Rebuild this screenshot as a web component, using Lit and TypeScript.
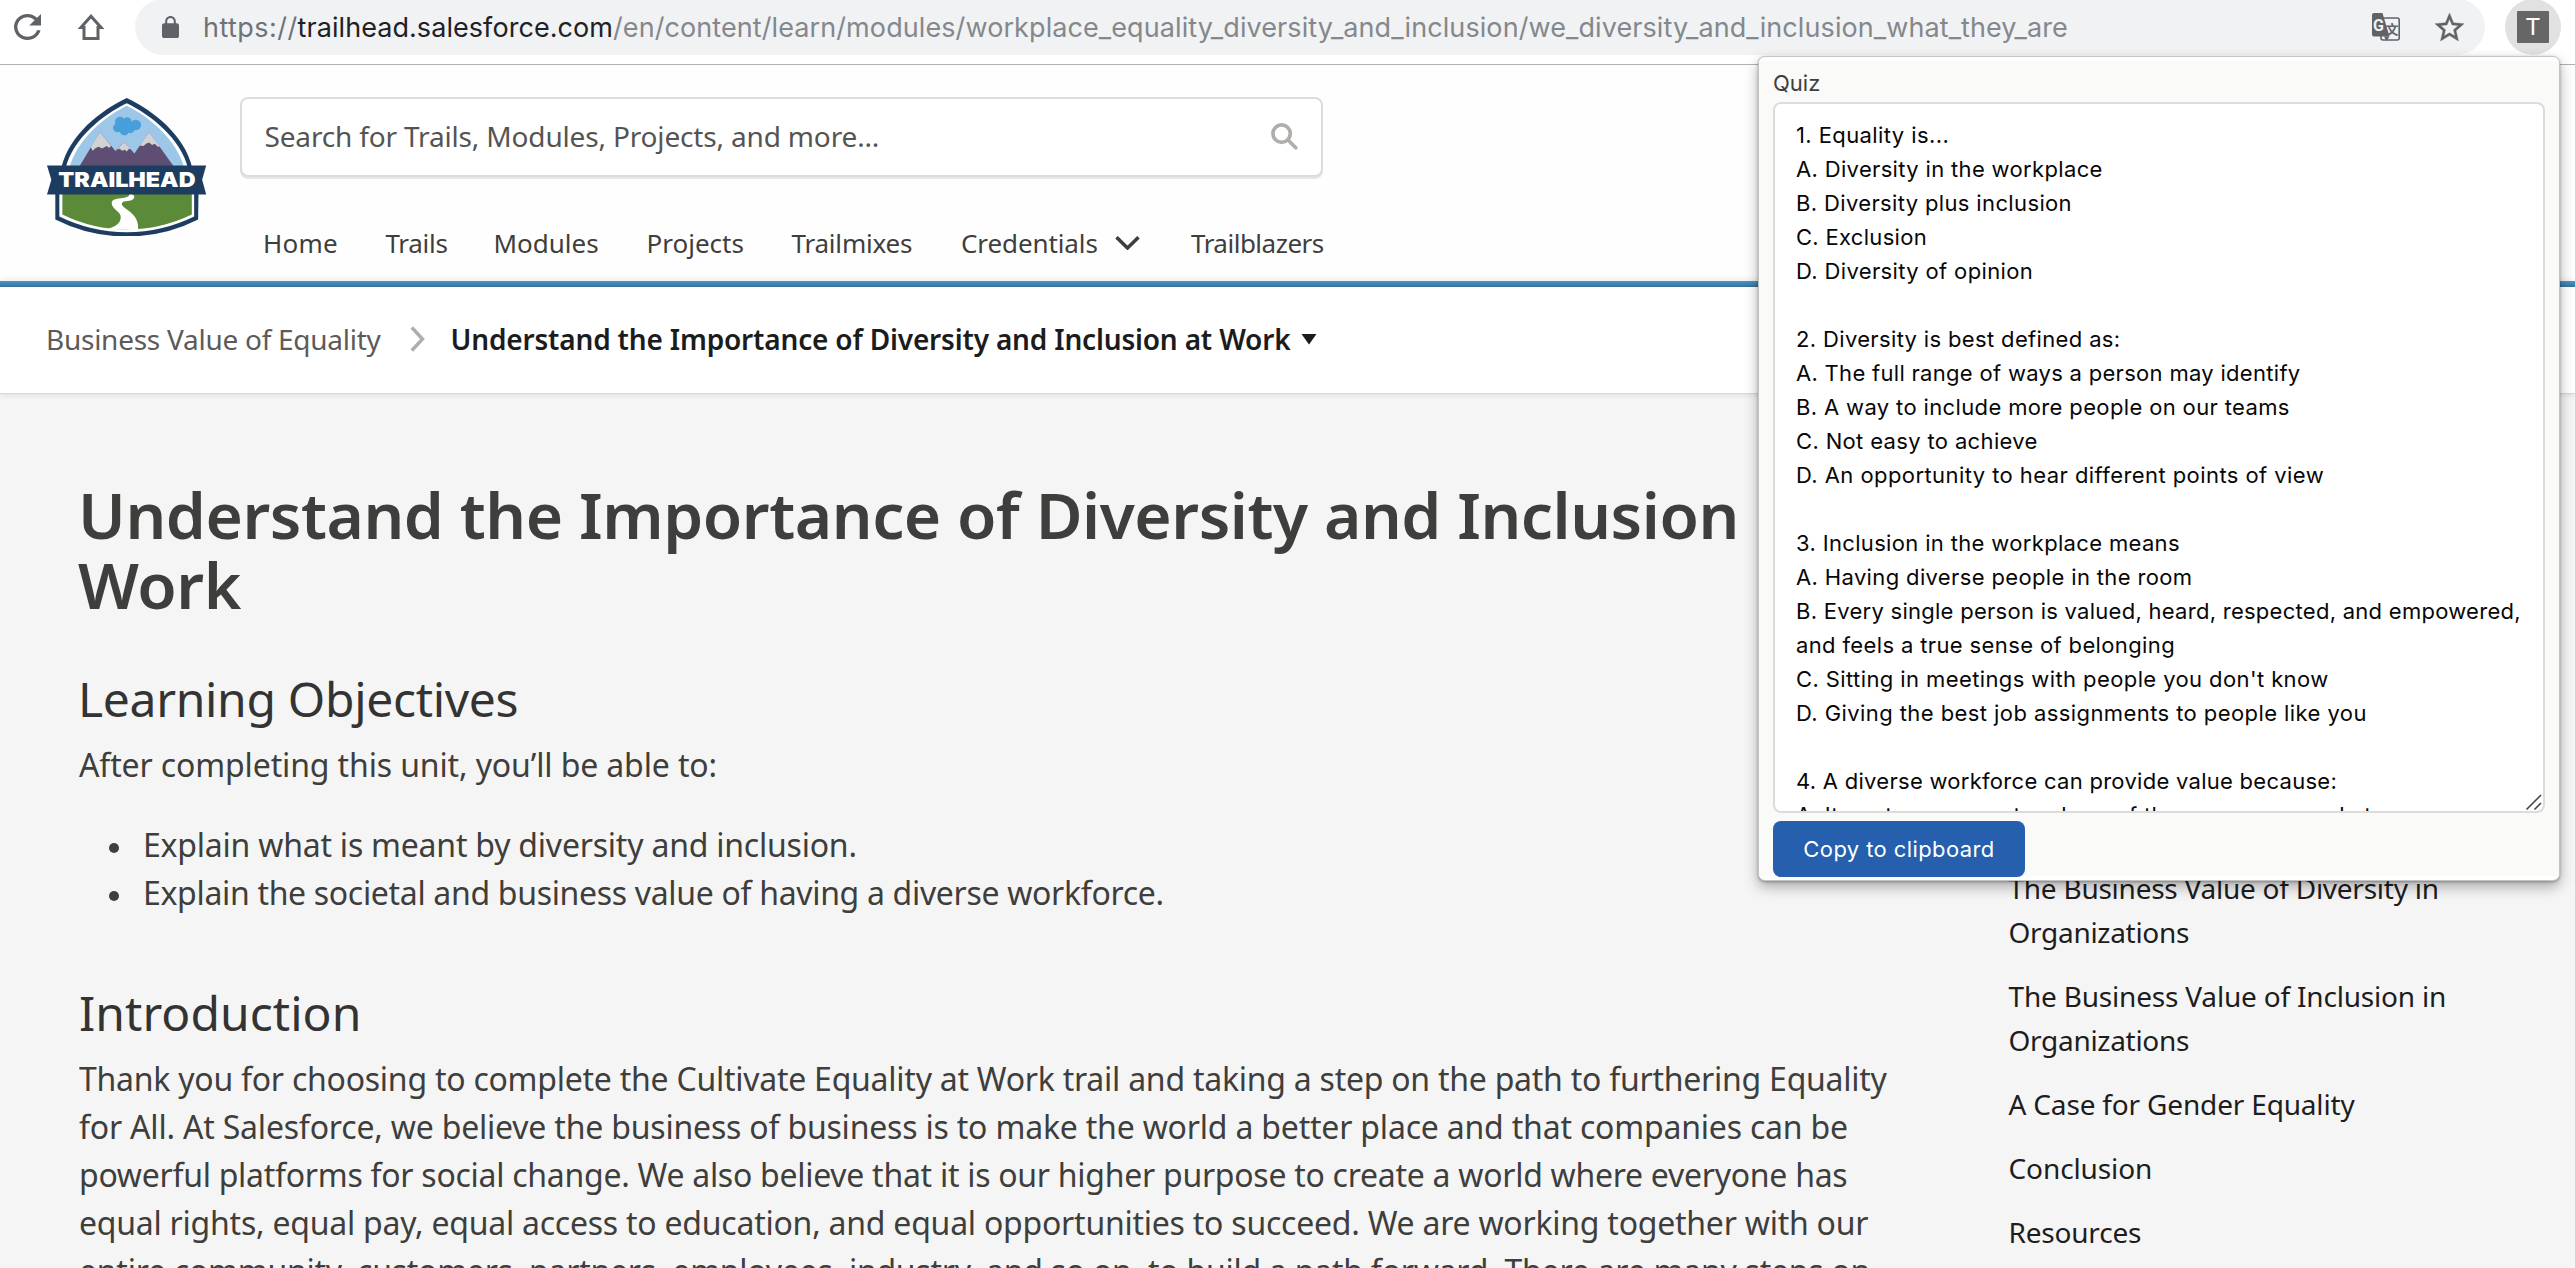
import { LitElement, html, css, svg } from "lit";
import { customElement } from "lit/decorators.js";

interface Line {
  text: string;
  ls: number;
}

const NAV: Line[] = [
  { text: "Home", ls: 0.2 },
  { text: "Trails", ls: -0.3 },
  { text: "Modules", ls: 0 },
  { text: "Projects", ls: 0 },
  { text: "Trailmixes", ls: -0.2 },
  { text: "Credentials", ls: -0.1 },
  { text: "Trailblazers", ls: -0.5 },
];

const OBJECTIVES: Line[] = [
  { text: "Explain what is meant by diversity and inclusion.", ls: -0.22 },
  { text: "Explain the societal and business value of having a diverse workforce.", ls: -0.32 },
];

const INTRO: Line[] = [
  { text: "Thank you for choosing to complete the Cultivate Equality at Work trail and taking a step on the path to furthering Equality", ls: -0.248 },
  { text: "for All. At Salesforce, we believe the business of business is to make the world a better place and that companies can be", ls: -0.198 },
  { text: "powerful platforms for social change. We also believe that it is our higher purpose to create a world where everyone has", ls: -0.275 },
  { text: "equal rights, equal pay, equal access to education, and equal opportunities to succeed. We are working together with our", ls: -0.238 },
  { text: "entire community, customers, partners, employees, industry, and so on, to build a path forward. There are many steps on", ls: -0.245 },
];

const TOC: Line[][] = [
  [{ text: "The Business Value of Diversity in", ls: -0.25 }, { text: "Organizations", ls: -0.3 }],
  [{ text: "The Business Value of Inclusion in", ls: -0.19 }, { text: "Organizations", ls: -0.3 }],
  [{ text: "A Case for Gender Equality", ls: -0.17 }],
  [{ text: "Conclusion", ls: -0.1 }],
  [{ text: "Resources", ls: -0.2 }],
];

const QUIZ: Line[] = [
  { text: "1. Equality is...", ls: 0.4 },
  { text: "A. Diversity in the workplace", ls: 0.34 },
  { text: "B. Diversity plus inclusion", ls: 0.36 },
  { text: "C. Exclusion", ls: 0.3 },
  { text: "D. Diversity of opinion", ls: 0.36 },
  { text: "", ls: 0 },
  { text: "2. Diversity is best defined as:", ls: 0.35 },
  { text: "A. The full range of ways a person may identify", ls: 0.3 },
  { text: "B. A way to include more people on our teams", ls: 0.36 },
  { text: "C. Not easy to achieve", ls: 0.35 },
  { text: "D. An opportunity to hear different points of view", ls: 0.43 },
  { text: "", ls: 0 },
  { text: "3. Inclusion in the workplace means", ls: 0.34 },
  { text: "A. Having diverse people in the room", ls: 0.36 },
  { text: "B. Every single person is valued, heard, respected, and empowered,", ls: 0.27 },
  { text: "and feels a true sense of belonging", ls: 0.37 },
  { text: "C. Sitting in meetings with people you don't know", ls: 0.4 },
  { text: "D. Giving the best job assignments to people like you", ls: 0.42 },
  { text: "", ls: 0 },
  { text: "4. A diverse workforce can provide value because:", ls: 0.28 },
  { text: "A. It captures a greater share of the consumer market", ls: 0.36 },
];

const row = (l: Line) => html`<span class="line" style="letter-spacing:${l.ls}px">${l.text}</span>`;

const logo = svg`
<svg class="logo" viewBox="52 53 478 415" preserveAspectRatio="none">
  <path fill="#1d3d60" d="M291 53C212 90 117 165 95 262H487C465 165 370 90 291 53Z"/>
  <path fill="#fff" d="M291 69C218 104 130 175 108 262H474C452 175 364 104 291 69Z"/>
  <path fill="#9cc7e8" d="M291 76C224 109 142 176 119 262H463C440 176 358 109 291 76Z"/>
  <g fill="#479fdb"><circle cx="271" cy="124" r="15"/><circle cx="293" cy="124" r="13"/><circle cx="318" cy="134" r="16"/><circle cx="264" cy="142" r="14"/><circle cx="284" cy="151" r="14"/><circle cx="302" cy="145" r="13"/><circle cx="290" cy="136" r="14"/></g>
  <path fill="#5f4e74" d="M149 258L211 155L257 212L283 185L314 219L358 155L432 258Z"/>
  <g fill="#d0d2d4">
    <path d="M211 155L183 200L189 211L198 203L207 199L217 204L231 197L238 203L244 196Z"/>
    <path d="M283 185L262 207L270 205L277 211L285 208L291 213L297 206L302 206Z"/>
    <path d="M358 155L330 195L341 197L350 189L358 186L367 194L375 190L384 199L390 198Z"/>
  </g>
  <path fill="#1d3d60" d="M77 335V417Q178 468 291 468T505 417L506 335Z"/>
  <path fill="#fff" d="M89 335V408Q185 455 291 455T493 408V335Z"/>
  <path fill="#5b8b38" d="M98 335V402Q190 447 291 447T486 402V335Z"/>
  <path fill="#fff" d="M299 341C312 341 315 346 313 353C308 366 276 358 276 371C281 388 330 396 325 449L232 445C262 438 273 424 273 410C273 391 246 386 246 368C247 347 300 360 299 341Z"/>
  <path fill="#1d3d60" d="M52 255H529L517 298L529 342H52L65 298Z"/>
  <text class="logo-text" x="86" y="320" textLength="411" lengthAdjust="spacingAndGlyphs">TRAILHEAD</text>
</svg>`;

@customElement("app-root")
export class AppRoot extends LitElement {
  static styles = css`
    :host {
      display: block;
      position: relative;
      width: 100%;
      height: 1268px;
      overflow: hidden;
      background: #f5f5f5;
      color: #3e3e3c;
      font-family: "Noto Sans", sans-serif;
    }
    * { box-sizing: border-box; }
    svg { display: block; flex: none; }
    .line { display: block; white-space: pre; }

    .toolbar {
      display: flex;
      align-items: center;
      height: 65px;
      padding: 0 15px 10px 14px;
      background: #fff;
      border-bottom: 1px solid #b0b1b3;
      color: #5f6368;
    }
    .home { margin-left: 37px; }
    .pill {
      display: flex;
      align-items: center;
      width: 2350px;
      height: 56px;
      margin-left: 31px;
      padding: 0 21.5px 0 27px;
      border-radius: 28px;
      background: #f1f2f4;
      flex: none;
    }
    .url {
      flex: 1;
      display: flex;
      margin-left: 24px;
      padding-top: 1px;
      font: 27px/40px Inter, sans-serif;
      white-space: pre;
    }
    .scheme { letter-spacing: 0.45px; color: #6f7377; }
    .domain { letter-spacing: 0.06px; color: #202124; }
    .path { letter-spacing: 0.09px; color: #84888c; }
    .star { margin-left: 35px; }
    .glyph-g { font: 700 16px Roboto, sans-serif; fill: #f1f2f4; }
    .glyph-w { font: 700 13px "Noto Sans CJK SC", sans-serif; fill: #5f6368; }
    .avatar {
      display: flex;
      align-items: center;
      justify-content: center;
      width: 56px;
      height: 56px;
      margin-left: 20px;
      border-radius: 50%;
      background: #e1e1e1;
      flex: none;
    }
    .avatar-tile {
      width: 32px;
      height: 32px;
      border-radius: 1px;
      background: #666;
      color: #fff;
      font: 24px/32px Roboto, sans-serif;
      text-align: center;
    }

    .header {
      display: flex;
      height: 216px;
      padding: 32px 0 0 47px;
      background: #fefefe;
    }
    .logo { width: 159.5px; height: 138.5px; margin-top: 0.7px; }
    .logo-text { font: 900 62px Inter, sans-serif; fill: #fff; }
    .header-main { width: 1083px; margin-left: 33px; }
    .search {
      display: flex;
      align-items: center;
      justify-content: space-between;
      height: 80px;
      padding: 0 22.5px 2px 23px;
      border: 2px solid #dcdcdb;
      border-radius: 8px;
      background: #fff;
      box-shadow: 0 2px 0 #e6e6e6;
      color: #555452;
      font-size: 28px;
      line-height: 40px;
      letter-spacing: -0.16px;
    }
    .nav {
      display: grid;
      grid-template-columns: 122.5px 108px 153px 145px 169.5px 230px auto;
      margin: 48px 0 0 23.500px;
      font-size: 26px;
      line-height: 36px;
    }
    .nav-item { display: flex; align-items: center; gap: 17px; white-space: nowrap; }

    .bar {
      height: 6px;
      background: linear-gradient(#4996c6, #39729a);
      box-shadow: 0 0 6px rgba(0, 0, 0, 0.12);
    }
    .crumbs {
      display: flex;
      align-items: center;
      height: 107px;
      padding: 0 0 2px 46px;
      background: #fff;
      border-bottom: 1px solid #d8d8d8;
      box-shadow: 0 2px 5px rgba(0, 0, 0, 0.08);
      font-size: 28px;
      line-height: 40px;
      white-space: nowrap;
      position: relative;
    }
    .crumb { color: #5c5b59; letter-spacing: -0.26px; width: 364px; }
    .crumb-current { margin-left: 25.500px; font-weight: 600; color: #1c1c1c; letter-spacing: -0.18px; width: 850.5px; }

    .page { display: flex; }
    .content { width: 2008.5px; padding: 86px 0 0 79px; flex: none; }
    .title { margin: 0 0 0 -1px; font-size: 64px; line-height: 70px; font-weight: 600; letter-spacing: -0.43px; }
    .section { margin: 0 0 0 -1px; font-size: 48px; line-height: 60px; font-weight: 400; color: #333; }
    .objectives { margin-top: 49px; letter-spacing: -0.32px; }
    .intro { margin-top: 66px; margin-left: 0; letter-spacing: 0.05px; }
    .text { margin: 12px 0 0; font-size: 32px; line-height: 48px; }
    .lead { letter-spacing: -0.13px; }
    .list { margin: 32px 0 0; padding: 0; list-style: none; font-size: 32px; line-height: 48px; }
    .item { display: flex; align-items: center; }
    .dot { width: 10px; height: 10px; margin: 5px 24px 0 30px; border-radius: 50%; background: #3e3e3c; }

    .toc {
      display: flex;
      flex-direction: column;
      gap: 20px;
      padding-top: 472px;
      font-size: 28px;
      line-height: 44px;
      color: #1d1d1d;
    }

    .popup {
      position: absolute;
      left: 1758px;
      top: 56px;
      width: 802px;
      height: 825px;
      padding: 4px 0;
      border: 1px solid #c4c4c4;
      border-radius: 7px;
      background: #fff;
      box-shadow: 0 6px 14px rgba(0, 0, 0, 0.3), 0 1px 3px rgba(0, 0, 0, 0.3);
    }
    .popup-body {
      height: 815px;
      padding: 7px 14.5px 0 14px;
      background: #fafaf9;
      font-family: Inter, sans-serif;
      font-size: 22px;
    }
    .label { line-height: 30px; }
    .area {
      position: relative;
      height: 711px;
      margin-top: 4px;
      padding: 14px 0 0 21px;
      border: 2px solid #dcdcdb;
      border-radius: 8px;
      background: #fff;
      color: #080707;
      line-height: 34px;
      overflow: hidden;
    }
    .area .line { height: 34px; }
    .grip { position: absolute; right: 0; bottom: 0; }
    .copy {
      display: block;
      width: 252px;
      height: 56px;
      margin: 8px 0 0;
      padding: 0;
      border: 0;
      border-radius: 8px;
      background: #255fad;
      color: #fff;
      font: 22px/56px Inter, sans-serif;
      letter-spacing: 0.4px;
    }
  `;

  render() {
    return html`
      <div class="toolbar">
        <svg width="27" height="26" viewBox="4 4 16 16" preserveAspectRatio="none" fill="#5f6368"><path d="M17.65 6.35A7.958 7.958 0 0012 4c-4.42 0-7.99 3.58-7.99 8s3.57 8 7.99 8c3.73 0 6.84-2.55 7.73-6h-2.08A5.99 5.99 0 0112 18c-3.31 0-6-2.69-6-6s2.69-6 6-6c1.66 0 3.14.69 4.22 1.78L13 11h7V4l-2.35 2.35z"/></svg>
        <svg class="home" width="26" height="26" viewBox="0 0 26 26" fill="none" stroke="#5f6368" stroke-width="3"><path d="M13 2.2L23 13.4H20V24.5H6V13.4H3Z"/></svg>
        <div class="pill">
          <svg width="17" height="22" viewBox="4 1 16 21" preserveAspectRatio="none" fill="#5f6368"><path d="M18 8h-1V6c0-2.760-2.240-5-5-5S7 3.240 7 6v2H6c-1.100 0-2 .9-2 2v10c0 1.100.9 2 2 2h12c1.100 0 2-.9 2-2V10c0-1.100-.9-2-2-2zM8.900 8V6c0-1.710 1.390-3.100 3.100-3.100s3.100 1.390 3.100 3.100v2H8.900z"/></svg>
          <div class="url"><span class="scheme">https://</span><span class="domain">trailhead.salesforce.com</span><span class="path">/en/content/learn/modules/workplace_equality_diversity_and_inclusion/we_diversity_and_inclusion_what_they_are</span></div>
          <svg width="28" height="28" viewBox="0 0 28 28">
            <rect x="9" y="5" width="18.200" height="22" rx="2" fill="none" stroke="#5f6368" stroke-width="1.600"/>
            <path d="M2 0H10.500L17.500 23.500H2A2 2 0 010 21.500V2A2 2 0 012 0Z" fill="#5f6368"/>
            <path d="M12 23.500H17.500L14.500 28Z" fill="#5f6368"/>
            <text class="glyph-g" x="1" y="17.500">G</text>
            <text class="glyph-w" x="13.500" y="20.500">文</text>
          </svg>
          <svg class="star" width="29" height="28" viewBox="2 2 20 19" preserveAspectRatio="none" fill="#5f6368" stroke="#5f6368" stroke-width=".25"><path d="M22 9.240l-7.190-.62L12 2 9.190 8.630 2 9.240l5.460 4.730L5.820 21 12 17.270 18.180 21l-1.630-7.030L22 9.240zM12 15.400l-3.760 2.270 1-4.280-3.320-2.880 4.380-.38L12 6.100l1.710 4.040 4.380.38-3.320 2.880 1 4.280L12 15.400z"/></svg>
        </div>
        <div class="avatar"><div class="avatar-tile">T</div></div>
      </div>

      <div class="header">
        ${logo}
        <div class="header-main">
          <div class="search">
            <span>Search for Trails, Modules, Projects, and more...</span>
            <svg width="27" height="27" viewBox="0 0 27 27" fill="none" stroke="#b0adab" stroke-width="3.700"><circle cx="10.600" cy="10.600" r="8.700"/><path d="M17 17L24.800 24.800" stroke-linecap="round"/></svg>
          </div>
          <div class="nav">
            ${NAV.map((n) => html`<div class="nav-item">${row(n)}${n.text === "Credentials"
              ? html`<svg width="25" height="14" viewBox="0 0 25 14" fill="none" stroke="#3e3e3c" stroke-width="3.500"><path d="M1.500 1.200L12.500 12L23.500 1.200"/></svg>`
              : ""}</div>`)}
          </div>
        </div>
      </div>
      <div class="bar"></div>
      <div class="crumbs">
        <span class="crumb">Business Value of Equality</span>
        <svg width="15" height="26" viewBox="0 0 15 26" fill="none" stroke="#b0adab" stroke-width="3.400"><path d="M1.800 1.500L12.500 13L1.800 24.500"/></svg>
        <span class="crumb-current">Understand the Importance of Diversity and Inclusion at Work</span>
        <svg width="16" height="11" viewBox="0 0 16 11" fill="#1c1c1c"><path d="M0.500 0H15.500L8 10.500Z"/></svg>
      </div>

      <div class="page">
        <div class="content">
          <h1 class="title"><span class="line">Understand the Importance of Diversity and Inclusion</span><span class="line">Work</span></h1>
          <h2 class="section objectives">Learning Objectives</h2>
          <p class="text lead">After completing this unit, you’ll be able to:</p>
          <ul class="list">
            ${OBJECTIVES.map((o) => html`<li class="item"><span class="dot"></span>${row(o)}</li>`)}
          </ul>
          <h2 class="section intro">Introduction</h2>
          <p class="text">${INTRO.map(row)}</p>
        </div>
        <div class="toc">
          ${TOC.map((t) => html`<div>${t.map(row)}</div>`)}
        </div>
      </div>

      <div class="popup">
        <div class="popup-body">
          <div class="label">Quiz</div>
          <div class="area">
            ${QUIZ.map(row)}
            <svg class="grip" width="18" height="18" viewBox="0 0 18 18" stroke="#444" stroke-width="1.600"><path d="M1.500 16.500L16 2M9.500 16.500L16 10"/></svg>
          </div>
          <button class="copy">Copy to clipboard</button>
        </div>
      </div>
    `;
  }
}
